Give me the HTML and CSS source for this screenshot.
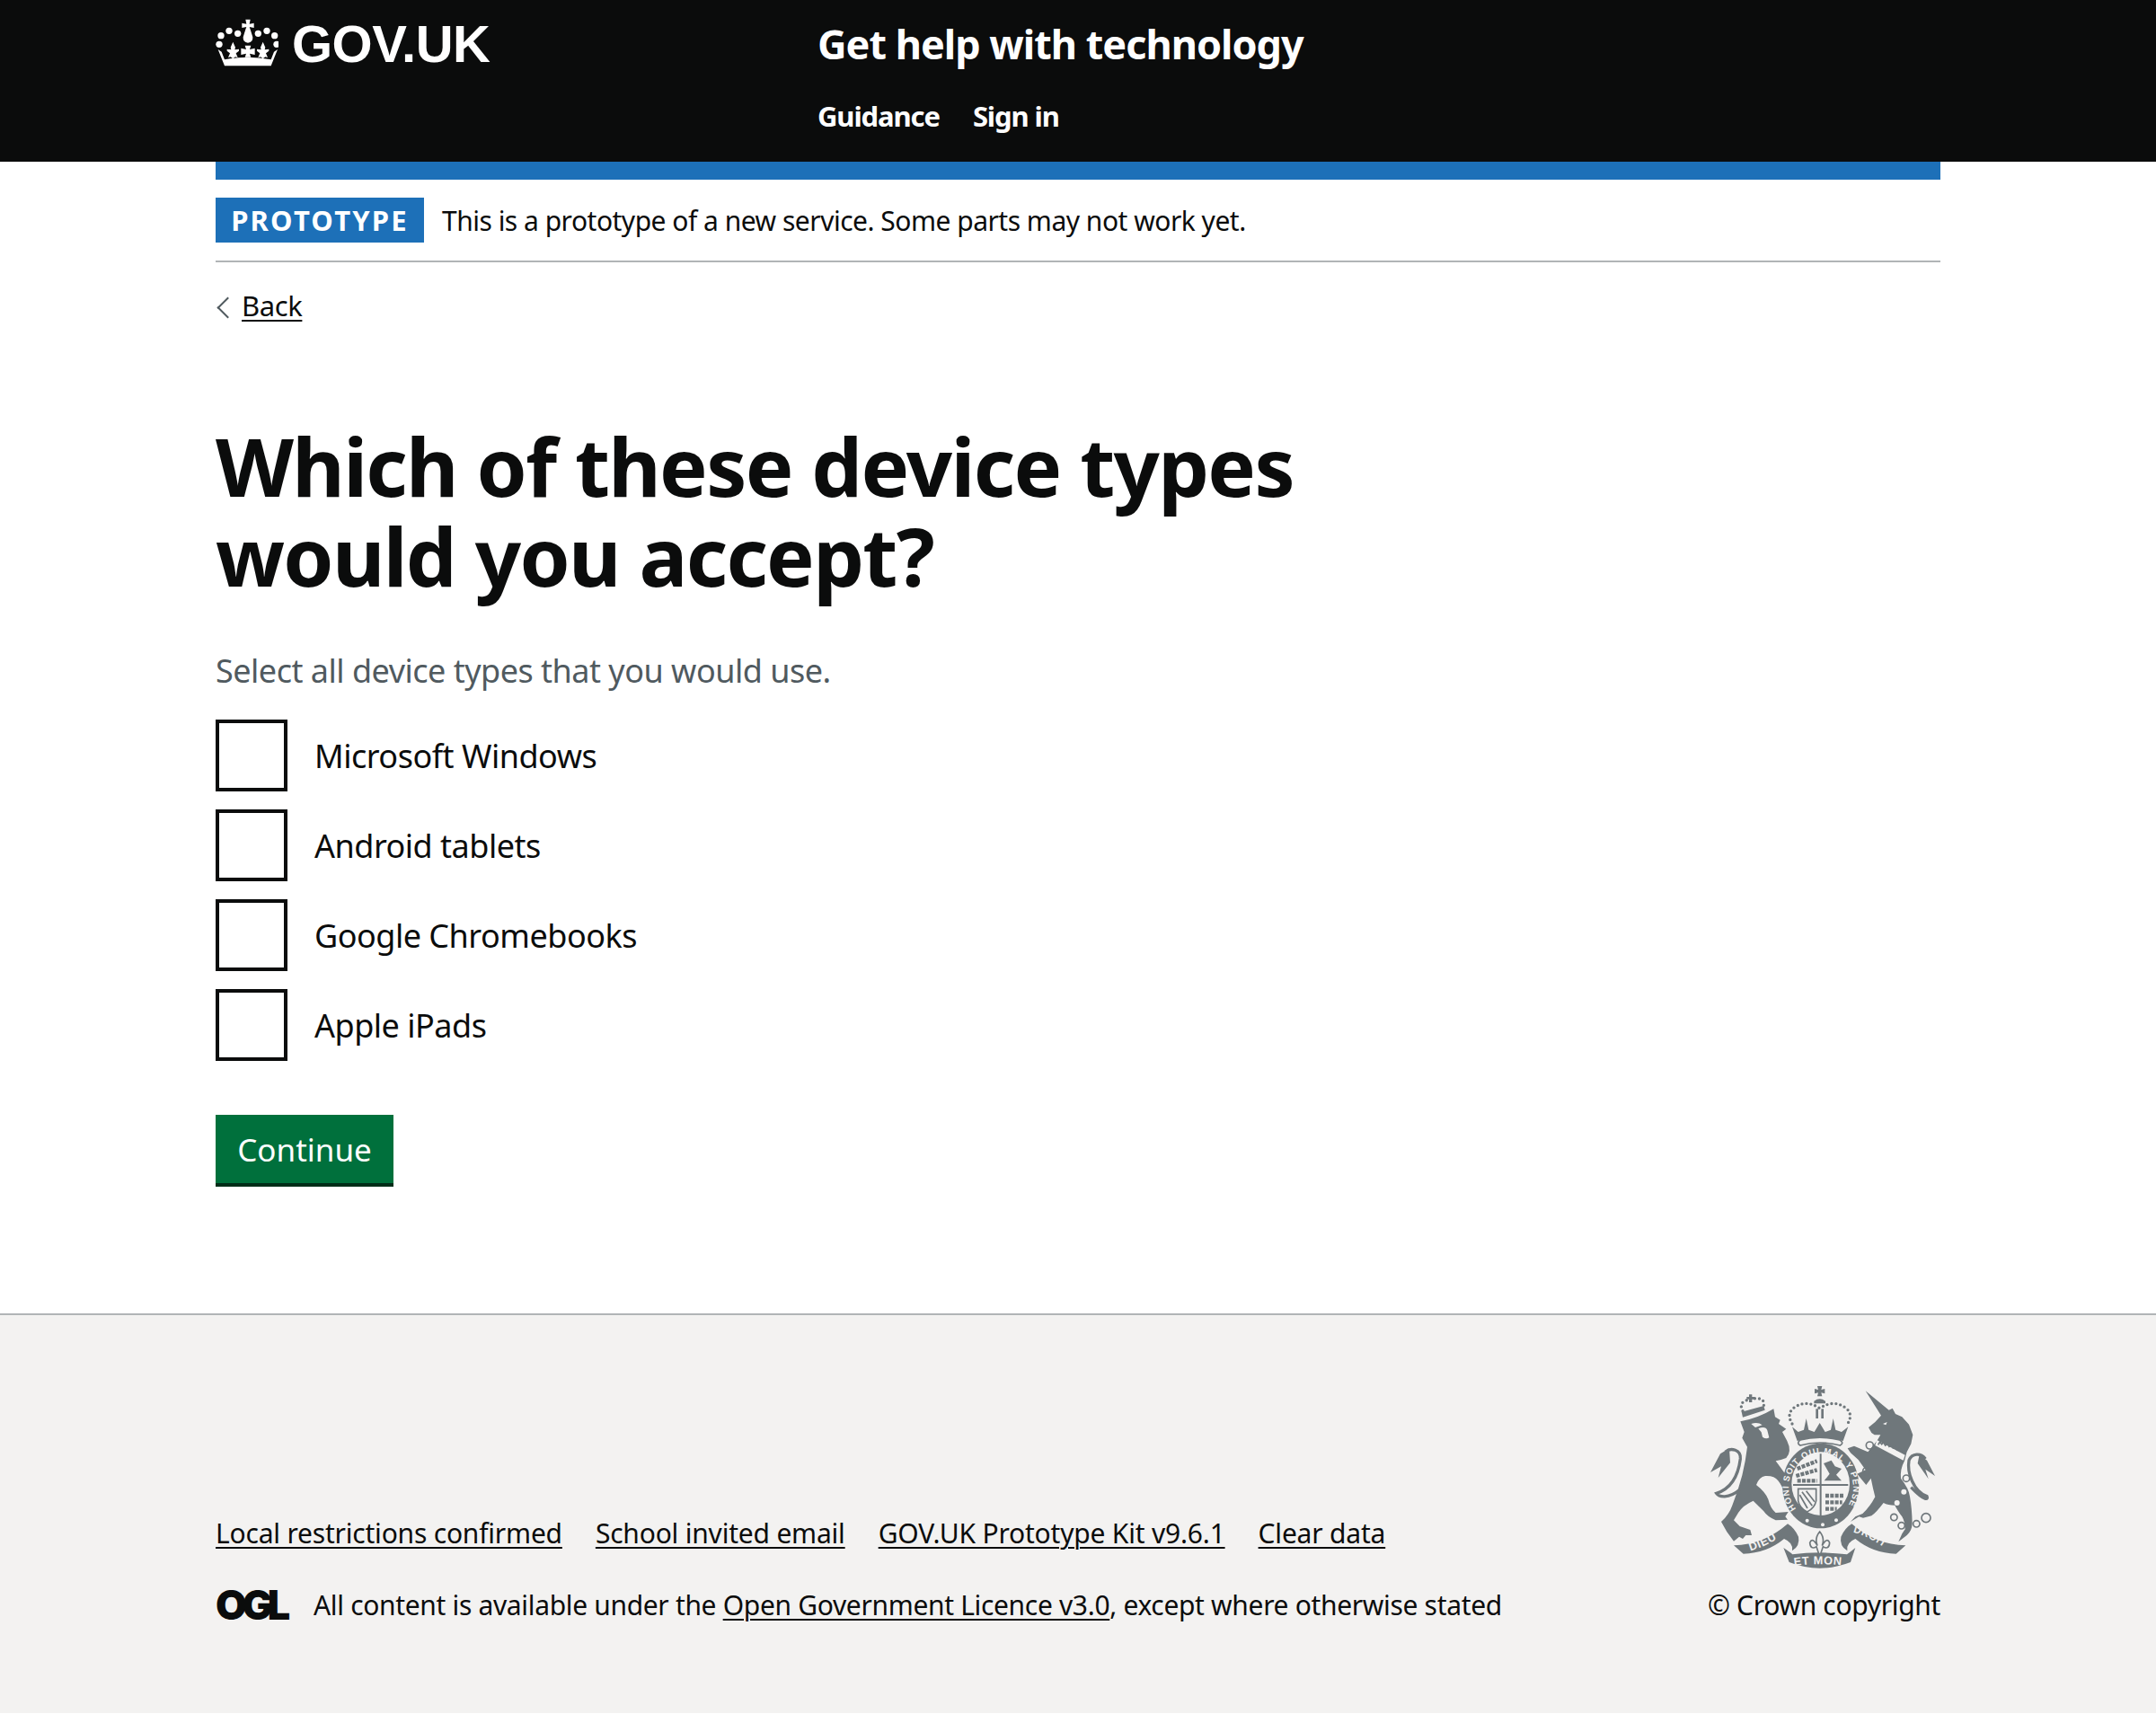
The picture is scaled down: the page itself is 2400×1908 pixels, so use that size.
FILE: index.html
```html
<!DOCTYPE html>
<html lang="en">
<head>
  <meta charset="UTF-8">
  <title>Which of these device types would you accept? - Get help with technology</title>
  <link rel="stylesheet" href="styles.css">
</head>
<body>

  <header class="site-header">
    <div class="wrap header-row">
      <a class="logo" href="#">
        <svg class="crown" viewBox="60 60 210 165" aria-hidden="true">
          <circle cx="72" cy="148" r="11"/><circle cx="78" cy="119" r="11"/><circle cx="105" cy="103" r="11"/><circle cx="134" cy="112" r="11"/>
          <circle cx="202" cy="112" r="11"/><circle cx="231" cy="103" r="11"/><circle cx="257" cy="119" r="11"/><circle cx="264" cy="148" r="11"/>
          <path d="M160 65h16l-3 15 15-3v16l-15-3 3 8 8 26q1 18-16 19-17-1-16-19l8-26 3-8-15 3V77l15 3z"/>
          <path d="M68 165l22 55h155l22-55-12 8-10 26q-77-16-155 0l-10-26z"/>
          <path d="M118 140l8 18-2 8 14-2 0 6-10 8 6 14-8-2-8 6-8-6-8 2 6-14-10-8 0-6 14 2-2-8z"/>
          <path d="M218 140l8 18-2 8 14-2 0 6-10 8 6 14-8-2-8 6-8-6-8 2 6-14-10-8 0-6 14 2-2-8z"/>
          <path d="M158 152h20l-4 13 17-4v22l-17-4 4 12-10 0-10 0 4-12-17 4v-22l17 4z"/>
        </svg>
        <span class="logo-text">GOV.UK</span>
      </a>
      <div class="service">
        <a class="service-name" href="#">Get help with technology</a>
        <nav class="service-nav">
          <a href="#">Guidance</a>
          <a href="#">Sign in</a>
        </nav>
      </div>
    </div>
  </header>

  <div class="wrap">
    <div class="blue-bar"></div>
    <div class="phase-banner">
      <strong class="phase-tag">PROTOTYPE</strong>
      <span>This is a prototype of a new service. Some parts may not work yet.</span>
    </div>

    <a class="back-link" href="#">Back</a>

    <main class="main">
      <h1>Which of these device types would you accept?</h1>
      <p class="hint">Select all device types that you would use.</p>

      <div class="checkboxes">
        <label class="check"><span class="box"></span>Microsoft Windows</label>
        <label class="check"><span class="box"></span>Android tablets</label>
        <label class="check"><span class="box"></span>Google Chromebooks</label>
        <label class="check"><span class="box"></span>Apple iPads</label>
      </div>

      <button class="button">Continue</button>
    </main>
  </div>

  <footer class="footer">
    <div class="wrap footer-row">
      <div class="footer-meta">
        <ul class="footer-links">
          <li><a href="#">Local restrictions confirmed</a></li>
          <li><a href="#">School invited email</a></li>
          <li><a href="#">GOV.UK Prototype Kit v9.6.1</a></li>
          <li><a href="#">Clear data</a></li>
        </ul>
        <div class="licence">
          <span class="ogl">OGL</span>
          <span>All content is available under the <a href="#">Open Government Licence v3.0</a>, except where otherwise stated</span>
        </div>
      </div>
      <div class="copyright">
        <svg class="crest" viewBox="60 30 780 630" aria-hidden="true">
          <defs>
            <path id="garter" d="M358 452A108 112 0 1 1 524 452"/>
            <path id="dieu" d="M200 594Q270 574 332 526"/>
            <path id="etmon" d="M348 643Q437 630 530 643"/>
            <path id="droit" d="M548 530Q610 545 680 602"/>
          </defs>
          <!-- lion -->
          <path d="M172 160Q230 150 283 118L288 145L305 155L300 168L325 185L312 195L328 225Q345 260 325 282Q305 290 290 292L318 330Q335 345 345 382L320 398Q308 370 298 358Q285 340 255 342Q235 345 225 372Q255 395 265 420Q272 450 290 465L332 462L322 478L330 488L290 490Q262 478 250 460L215 425Q180 440 165 465L150 490L170 510L205 522L210 540L190 540L180 552L168 545L150 560Q125 530 108 495Q135 470 145 440Q165 390 178 340Q190 290 195 245L178 215L185 195z"/>
          <path class="cut" d="M208 168Q230 160 245 172L222 180zM232 184Q256 174 262 190L268 214Q258 220 246 212L242 196z"/>
          <path class="line" d="M170 388C132 420 100 412 92 400C140 385 165 340 172 285C175 255 140 245 122 262"/>
          <path d="M135 250L105 268L72 330L108 310L98 348L138 298z"/>
          <!-- lion crown -->
          <path d="M176 128L250 108L254 122L180 146z"/>
          <path class="dots" d="M180 125Q166 98 190 92Q205 76 222 84Q254 80 250 108"/>
          <path d="M201 70h10v8h8v8h-8v10h-10V86h-8v-8h8z"/>
          <!-- unicorn -->
          <path d="M590 58L668 122L680 116L690 135L712 145L735 170L748 205L742 235L728 262L720 292Q705 320 708 350Q735 385 738 410Q745 450 746 500Q745 525 728 540L700 562L712 535L722 520Q722 495 712 478Q695 455 688 440Q665 440 650 432Q625 465 610 475L582 482L568 478L540 495L556 478L580 468Q605 445 622 412Q615 385 608 350L592 372L562 335L590 322L566 288L540 265L530 250L552 242L598 262L628 225L640 205L620 205L610 198L600 180L622 162L642 140z"/>
          <path class="cut" d="M628 222L722 272L716 290L622 240z"/>
          <path class="cut" d="M648 168l14-6-4 10z"/>
          <path class="line-thin" d="M632 238l6-10 6 8 6-6 6 10 8-6 5 10 8-5 5 10 8-4 6 10 8-6 8 12"/>
          <path class="line" d="M742 380C790 430 800 420 795 410C750 395 728 330 735 290C745 265 775 265 790 285"/>
          <path d="M770 270L795 290L822 342L790 320L800 352L764 300z"/>
          <g class="rings">
            <circle cx="604" cy="240" r="12"/><circle cx="593" cy="326" r="12"/><circle cx="726" cy="350" r="11"/>
            <circle cx="685" cy="480" r="11"/><circle cx="710" cy="508" r="11"/><circle cx="760" cy="502" r="11"/><circle cx="792" cy="482" r="15"/>
          </g>
          <circle class="cut" cx="718" cy="395" r="9"/><circle class="cut" cx="695" cy="432" r="9"/>
          <!-- big crown -->
          <path d="M429 42h16l-3 12 12-3v16l-12-3 3 12h-16l3-12-12 3V51l12 3z"/>
          <path d="M418 92q19-14 38 0v8h-38z"/>
          <rect x="424" y="118" width="8" height="32"/><rect x="442" y="118" width="8" height="32"/>
          <path class="dots" d="M345 168Q325 135 350 115Q390 85 437 116Q484 85 524 115Q550 135 530 168"/>
          <path d="M345 178L362 225Q437 205 515 225L532 178L510 195L490 188L482 150L474 188L455 195L437 165L419 195L400 188L392 150L384 188L365 195z"/>
          <path class="outline" d="M372 222Q437 205 504 222Q520 232 505 240Q437 222 372 240Q358 232 372 222z"/>
          <!-- garter and shield -->
          <ellipse cx="440" cy="375" rx="128" ry="142"/>
          <ellipse class="cut" cx="440" cy="368" rx="97" ry="106"/>
          <path d="M348 369H532V375H443V474H437V375H348zM437 268h6v101h-6z"/>
          <path class="row" d="M362 318L428 292M358 342L428 322M362 358H428M456 408H516M456 430H512M456 452H494"/>
          <path d="M450 300L476 290L488 310L510 318L492 338L510 358H452L470 335z"/>
          <path class="line-thin" d="M365 385H425V425Q420 450 395 462Q370 450 365 425z"/>
          <path class="line-thin" d="M378 395L412 442M392 392L420 428M370 405L396 450"/>
          <text class="motto garter-text"><textPath href="#garter" startOffset="0%">HONI SOIT QUI MAL Y PENSE</textPath></text>
          <circle class="cut" cx="395" cy="491" r="6"/><circle class="cut" cx="447" cy="505" r="6"/><circle class="cut" cx="492" cy="490" r="6"/>
          <!-- ribbons -->
          <path d="M150 574Q250 572 330 502Q352 515 366 545Q372 575 345 592Q350 565 318 552Q260 600 182 602z"/>
          <path d="M724 574Q624 572 544 502Q522 515 508 545Q502 575 529 592Q524 565 556 552Q614 600 692 602z"/>
          <path d="M316 582Q340 598 346 604Q437 592 528 604Q540 595 556 582L540 630Q437 670 335 630z"/>
          <text class="motto"><textPath href="#dieu" startOffset="4%">DIEU</textPath></text>
          <text class="motto small"><textPath href="#droit" startOffset="0%">DROIT</textPath></text>
          <text class="motto"><textPath href="#etmon" startOffset="2%">ET MON</textPath></text>
          <!-- fleur under the shield -->
          <path class="outline" d="M437 528Q455 550 445 575Q462 545 470 565Q468 590 448 578L440 602H434L426 578Q406 590 404 565Q412 545 429 575Q419 550 437 528z"/>
        </svg>
        <a href="#" class="crown-copy">© Crown copyright</a>
      </div>
    </div>
  </footer>

</body>
</html>
```

FILE: styles.css
```css
* {
  box-sizing: border-box;
}

body {
  margin: 0;
  font-family: "Noto Sans", sans-serif;
  color: #0b0c0c;
  background: #fff;
}

a {
  color: inherit;
}

.wrap {
  width: 1920px;
  margin: 0 auto;
}

/* header */
.site-header {
  background: #0b0c0c;
  height: 180px;
  color: #fff;
}

.header-row {
  display: flex;
}

.logo {
  display: flex;
  width: 670px;
  height: 100px;
  padding-top: 20px;
  text-decoration: none;
}

.crown {
  width: 70px;
  height: 55px;
  fill: #fff;
}

.logo-text {
  margin-left: 15px;
  font-family: "Liberation Sans", sans-serif;
  font-weight: 700;
  font-size: 58px;
  line-height: 58px;
  letter-spacing: -0.5px;
}

.service-name {
  display: block;
  padding-top: 20px;
  font-size: 45px;
  line-height: 58px;
  font-weight: 700;
  letter-spacing: -1px;
  text-decoration: none;
}

.service-nav {
  display: flex;
  gap: 37px;
  margin-top: 30px;
  font-size: 31px;
  line-height: 42px;
  font-weight: 700;
  letter-spacing: -1.1px;
}

.service-nav a {
  text-decoration: none;
}

/* phase banner */
.blue-bar {
  height: 20px;
  background: #1d70b8;
}

.phase-banner {
  display: flex;
  align-items: center;
  gap: 20px;
  height: 92px;
  padding-top: 20px;
  padding-bottom: 20px;
  border-bottom: 2px solid #b1b4b6;
  font-size: 30px;
  letter-spacing: -0.5px;
}

.phase-tag {
  display: block;
  width: 232px;
  height: 50px;
  background: #1d70b8;
  color: #fff;
  font-size: 31px;
  line-height: 50px;
  text-align: center;
  letter-spacing: 2.2px;
}

.back-link {
  display: inline-block;
  position: relative;
  margin-top: 29px;
  padding-left: 29px;
  font-size: 31px;
  line-height: 38px;
  letter-spacing: -0.4px;
  text-decoration-thickness: 2px;
  text-underline-offset: 4px;
}

.back-link::before {
  content: "";
  position: absolute;
  left: 5px;
  top: 13px;
  width: 15px;
  height: 15px;
  border-left: 2px solid #505a5f;
  border-bottom: 2px solid #505a5f;
  transform: rotate(45deg);
}

/* question */
.main {
  padding-top: 109px;
}

h1 {
  width: 1260px;
  margin: 0;
  font-size: 90px;
  line-height: 100px;
  font-weight: 700;
  letter-spacing: -1.7px;
}

.hint {
  margin: 54px 0 0;
  font-size: 36px;
  line-height: 50px;
  color: #505a5f;
  letter-spacing: -0.5px;
}

.checkboxes {
  display: flex;
  flex-direction: column;
  gap: 20px;
  margin-top: 29px;
}

.check {
  display: flex;
  align-items: center;
  gap: 30px;
  height: 80px;
  font-size: 36px;
  letter-spacing: -0.5px;
}

.box {
  width: 80px;
  height: 80px;
  border: 4px solid #0b0c0c;
}

.button {
  display: block;
  width: 198px;
  height: 80px;
  margin-top: 60px;
  border: 0;
  background: #00703c;
  box-shadow: inset 0 -4px 0 #002d18;
  color: #fff;
  font-family: inherit;
  font-size: 35px;
  padding: 0 0 4px;
}

/* footer */
.footer {
  margin-top: 141px;
  height: 445px;
  background: #f3f2f1;
  border-top: 2px solid #b1b4b6;
  font-size: 30px;
  letter-spacing: -0.33px;
}

.footer a {
  text-decoration-thickness: 2px;
  text-underline-offset: 4px;
}

.footer-row {
  display: flex;
  justify-content: space-between;
  align-items: flex-end;
  height: 100%;
  padding-bottom: 100px;
}

.footer-links {
  display: flex;
  gap: 37px;
  margin: 0 0 40px;
  padding: 0;
  list-style: none;
  line-height: 40px;
  letter-spacing: -0.2px;
}

.licence {
  display: flex;
  align-items: center;
  gap: 27px;
  line-height: 40px;
}

.ogl {
  width: 82px;
  font-family: Inter, sans-serif;
  font-weight: 900;
  font-size: 45px;
  letter-spacing: -5.5px;
  line-height: 40px;
}

.copyright {
  display: flex;
  flex-direction: column;
  align-items: flex-end;
  line-height: 40px;
}

.crest {
  display: block;
  width: 260px;
  height: 210px;
  margin-bottom: 18px;
  fill: #6f777b;
}

.crown-copy {
  text-decoration: none;
}

.crest .cut {
  fill: #f3f2f1;
}

.crest .line {
  fill: none;
  stroke: #6f777b;
  stroke-width: 10;
}

.crest .line-thin {
  fill: none;
  stroke: #6f777b;
  stroke-width: 5;
}

.crest .dots {
  fill: none;
  stroke: #6f777b;
  stroke-width: 10;
  stroke-linecap: round;
  stroke-dasharray: 0 15;
}

.crest .row {
  fill: none;
  stroke: #6f777b;
  stroke-width: 13;
  stroke-dasharray: 12 4;
}

.crest .outline {
  fill: #f3f2f1;
  stroke: #6f777b;
  stroke-width: 5;
}

.crest .rings circle {
  fill: none;
  stroke: #6f777b;
  stroke-width: 5;
}

.crest .motto {
  font-family: "Liberation Sans", sans-serif;
  font-weight: 700;
  font-size: 38px;
  letter-spacing: 2px;
  fill: #f3f2f1;
}

.crest .motto.small {
  font-size: 34px;
}

.crest .garter-text {
  font-size: 29px;
  letter-spacing: 3px;
}
```
